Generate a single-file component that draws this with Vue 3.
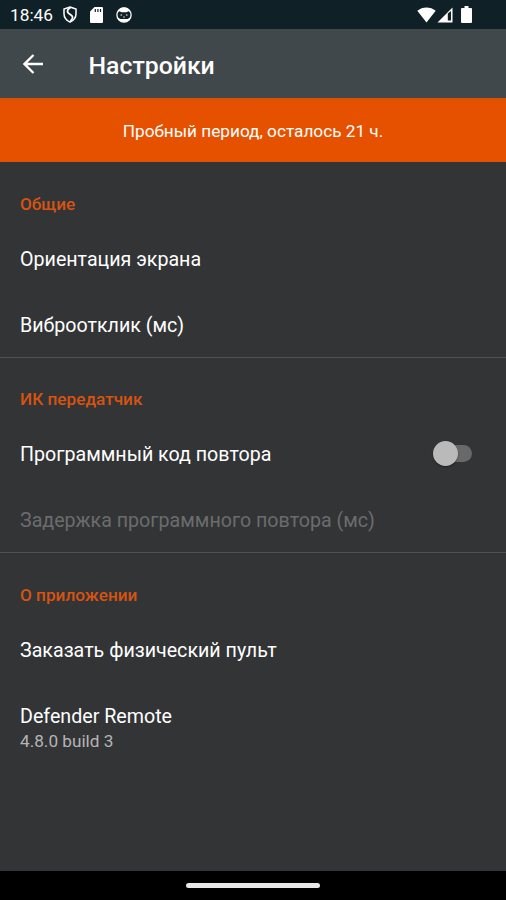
<script setup>
const sections = [
  { title: 'Общие', rows: [{ label: 'Ориентация экрана' }, { label: 'Виброотклик (мс)' }] },
  {
    title: 'ИК передатчик',
    rows: [
      { label: 'Программный код повтора', toggle: true },
      { label: 'Задержка программного повтора (мс)', disabled: true },
    ],
  },
  {
    title: 'О приложении',
    rows: [{ label: 'Заказать физический пульт' }, { label: 'Defender Remote', summary: '4.8.0 build 3' }],
  },
]
</script>

<template>
  <div class="screen">
    <header class="status">
      <span class="clock">18:46</span>
      <svg class="shield" viewBox="0 0 14 17">
        <path d="M7 1 13 3v4.800c0 3.700-2.300 6.600-6 8.300C3.300 14.400 1 11.500 1 7.800V3z" fill="none" stroke="#fff" stroke-width="1.500" />
        <path d="M7.500 1.500C5 3 4 4.600 4.800 6.300 5.600 8 9.300 9 9.600 11.200 9.800 12.800 8.600 14 7.400 15" fill="none" stroke="#fff" stroke-width="1.800" />
      </svg>
      <svg class="sd" viewBox="0 0 13 16">
        <path d="M4.500 0H12q1 0 1 1v14q0 1-1 1H1q-1 0-1-1V4.500z" fill="#fff" />
        <path d="M5.300 2v3M7.900 2v3M10.500 2v3" stroke="#102027" stroke-width="1.200" />
      </svg>
      <svg class="cat" viewBox="0 0 16 16">
        <circle cx="8" cy="8" r="7.100" fill="none" stroke="#fff" stroke-width="1.300" />
        <path d="M1.500 5A7 7 0 0 1 14.500 5L12.500 4.200 10.500 5.200h-5L3.500 4.200z" fill="#fff" />
        <path d="M1.500 10.500 4.500 12h7l3-1.500A7 7 0 0 1 1.500 10.500z" fill="#fff" />
        <path d="M4.500 8h1.600M9.900 8h1.600M7.300 10h1.400" stroke="#fff" stroke-width="1" />
      </svg>
      <span class="grow"></span>
      <svg class="wifi" viewBox="0 0 19 16">
        <path d="M.3 3.800C5.500-.7 13.500-.7 18.700 3.800L9.500 15.500z" fill="#fff" />
      </svg>
      <svg class="signal" viewBox="0 0 16 16">
        <path d="M15.500.5v15H.500z" fill="#fff" />
        <path d="M10.800 13.500V6.500l3.200-2.500v9.500z" fill="#102027" />
      </svg>
      <svg class="battery" viewBox="0 0 11 17">
        <path d="M3.500 0h4v2H10q1 0 1 1v13q0 1-1 1H1q-1 0-1-1V3q0-1 1-1h2.500z" fill="#fff" />
      </svg>
    </header>

    <div class="appbar">
      <svg class="back" viewBox="0 0 20 20">
        <path d="M20 10H1.500M10.500 1 1.500 10l9 9" fill="none" stroke="#fff" stroke-width="2.300" />
      </svg>
      <h1>Настройки</h1>
    </div>

    <div class="banner">Пробный период, осталось 21 ч.</div>

    <main>
      <section v-for="s in sections" :key="s.title">
        <h2>{{ s.title }}</h2>
        <div v-for="r in s.rows" :key="r.label" class="row" :class="{ disabled: r.disabled }">
          <div class="text">
            <div class="label">{{ r.label }}</div>
            <div v-if="r.summary" class="summary">{{ r.summary }}</div>
          </div>
          <span v-if="r.toggle" class="switch"><span class="thumb"></span><span class="track"></span></span>
        </div>
      </section>
    </main>

    <footer><span class="pill"></span></footer>
  </div>
</template>

<style>
body { background: #333436; }
</style>

<style scoped>
.screen {
  width: 506px;
  height: 900px;
  display: flex;
  flex-direction: column;
  overflow: hidden;
  background: #333436;
  color: #fff;
  font-family: Roboto, sans-serif;
}
svg { display: block; flex: none; }
.status {
  flex: none;
  height: 29px;
  display: flex;
  align-items: center;
  padding: 0 34px 0 10px;
  background: #102027;
}
.clock { width: 53px; font-size: 17.3px; line-height: 20px; padding-top: 1px; }
.shield { width: 14px; height: 17px; }
.sd { width: 13px; height: 16px; margin-left: 13px; }
.cat { width: 16px; height: 16px; margin-left: 13px; }
.grow { flex: 1; }
.wifi { width: 19px; height: 16px; }
.signal { width: 16px; height: 16px; margin-left: 1px; }
.battery { width: 11px; height: 17px; margin-left: 8px; }
.appbar {
  flex: none;
  height: 69px;
  display: flex;
  align-items: center;
  padding-left: 23px;
  background: #40484b;
}
.back { width: 20px; height: 20px; }
h1 { margin: 4px 0 0 45.5px; font-size: 24.8px; line-height: 30px; font-weight: 500; }
.banner {
  flex: none;
  height: 64px;
  line-height: 66px;
  text-align: center;
  font-size: 17.2px;
  background: linear-gradient(#d95107, #e65100 4px);
}
main { flex: 1; }
section { height: 195.5px; box-sizing: border-box; border-bottom: 1px solid #505153; }
section:last-child { border: 0; }
h2 {
  margin: 0;
  height: 64px;
  box-sizing: border-box;
  padding: 31.900px 20px 0;
  font-size: 17.2px;
  line-height: 20px;
  font-weight: 500;
  color: #d65312;
}
.row {
  height: 66px;
  display: flex;
  align-items: center;
  justify-content: space-between;
  padding: 0 34px 0 20px;
}
.text { padding-top: 1px; }
.label { font-size: 19.65px; line-height: 24px; }
.disabled .label { color: #6b6c6d; }
.summary { margin-bottom: -24px; font-size: 17.2px; line-height: 24px; color: #b5b5b6; }
.switch { display: flex; align-items: center; margin-top: -2px; }
.thumb { z-index: 1; width: 25px; height: 25px; border-radius: 50%; background: #bababa; box-shadow: 0 1px 2px rgba(0, 0, 0, 0.4); }
.track { width: 31px; height: 17px; margin-left: -17px; border-radius: 9px; background: #69696a; }
footer { flex: none; height: 29px; display: flex; justify-content: center; align-items: center; background: #000; }
.pill { width: 134px; height: 5px; border-radius: 3px; background: #e7e7e7; }
</style>
